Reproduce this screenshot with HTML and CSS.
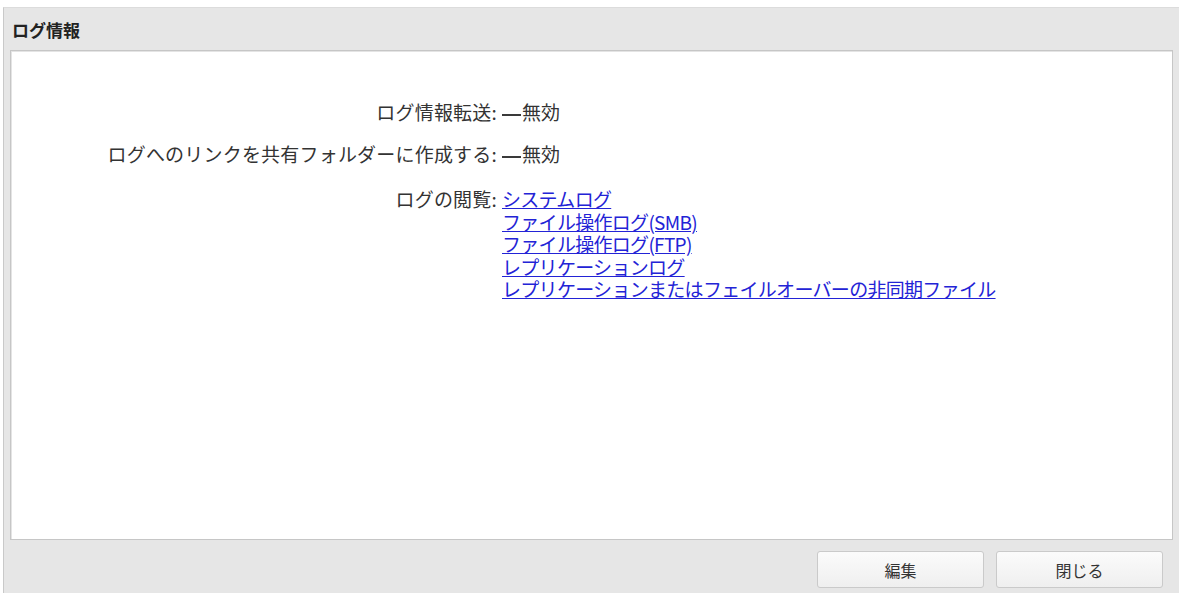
FILE: index.html
```html
<!DOCTYPE html>
<html lang="ja">
<head>
<meta charset="utf-8">
<title>ログ情報</title>
<link rel="stylesheet" href="styles.css">
</head>
<body>
<div class="panel">
  <div class="header">ログ情報</div>
  <div class="content">
    <div class="row">
      <div class="label">ログ情報転送:</div>
      <div class="value"><span class="dash"></span>無効</div>
    </div>
    <div class="row">
      <div class="label">ログへのリンクを共有フォルダーに作成する:</div>
      <div class="value"><span class="dash"></span>無効</div>
    </div>
    <div class="row">
      <div class="label">ログの閲覧:</div>
      <div class="value links">
        <a href="#">システムログ</a>
        <a href="#">ファイル操作ログ(SMB)</a>
        <a href="#">ファイル操作ログ(FTP)</a>
        <a href="#">レプリケーションログ</a>
        <a href="#">レプリケーションまたはフェイルオーバーの非同期ファイル</a>
      </div>
    </div>
  </div>
  <div class="footer">
    <button class="btn">編集</button>
    <button class="btn">閉じる</button>
  </div>
</div>
</body>
</html>
```
FILE: styles.css
```css
html, body {
  margin: 0;
  padding: 0;
  background: #ffffff;
  font-family: "Noto Sans CJK JP", "Noto Sans", sans-serif;
}
.panel {
  margin: 7px 0 0 3px;
  height: 586px;
  background: #e6e6e6;
  border-left: 1px solid #c9c9c9;
  border-top: 1px solid #dcdcdc;
  box-sizing: border-box;
  display: flex;
  flex-direction: column;
}
.header {
  height: 42px;
  padding-left: 8px;
  display: flex;
  align-items: center;
  font-size: 17px;
  font-weight: bold;
  color: #222;
}
.content {
  margin: 0 6px 0 6px;
  height: 490px;
  background: #ffffff;
  border: 1px solid #c6c6c6;
  box-shadow: inset 1px 1px 0 #e4e4e4;
  box-sizing: border-box;
  padding-top: 50px;
}
.row {
  display: grid;
  grid-template-columns: 486px 1fr;
  column-gap: 5px;
  margin-bottom: 20px;
  font-size: 19px;
  line-height: 22px;
  color: #333;
}
.row:nth-child(2) { margin-bottom: 23px; }
.label {
  text-align: right;
  white-space: nowrap;
  letter-spacing: 0.2px;
}
.value {
  white-space: nowrap;
}
.dash {
  display: inline-block;
  width: 19px;
  height: 2px;
  background: #3a3a3a;
  vertical-align: middle;
  margin: 0 1px 0 0;
}
.links {
  display: flex;
  flex-direction: column;
  align-items: flex-start;
  line-height: 22.5px;
}
.links a {
  color: #2323d6;
  text-decoration: underline;
  white-space: nowrap;
  letter-spacing: -0.7px;
}
.footer {
  display: flex;
  justify-content: flex-end;
  gap: 12px;
  padding: 11px 16px 0 0;
}
.btn {
  width: 167px;
  height: 37px;
  font-family: "Noto Sans CJK JP", "Noto Sans", sans-serif;
  font-size: 16px;
  color: #333;
  background: linear-gradient(#fbfbfb, #efefef);
  border: 1px solid #cacaca;
  border-radius: 3px;
  padding: 0;
}
```
